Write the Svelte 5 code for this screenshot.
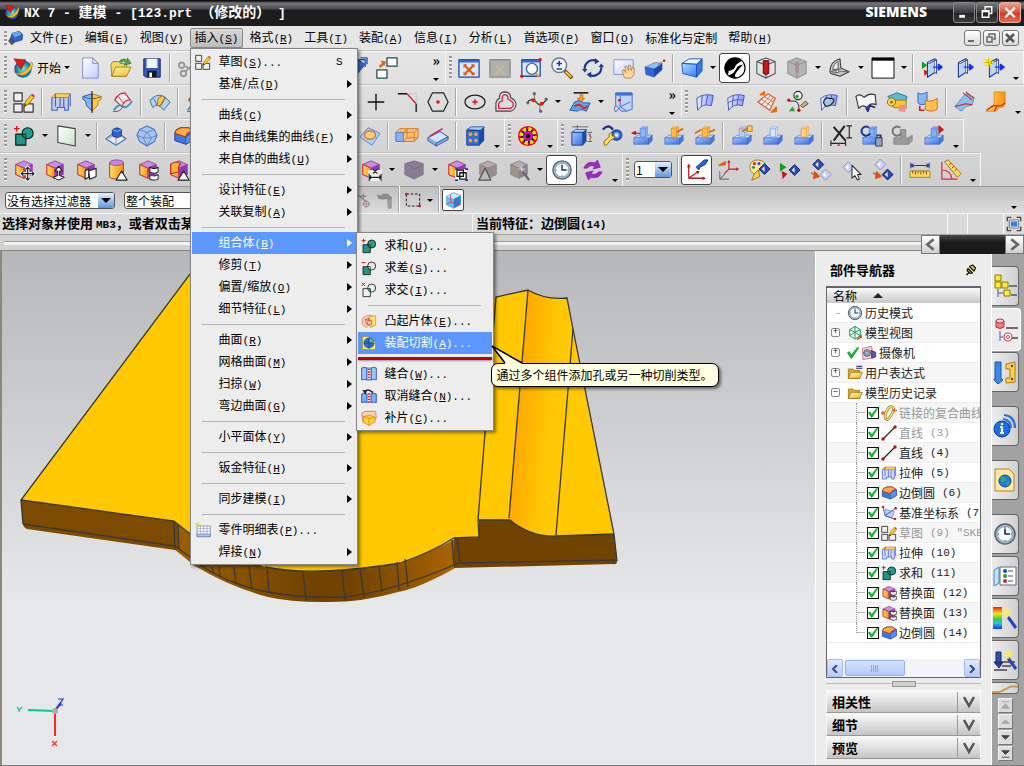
<script>
  const p = (d, fill = 'none', stroke = 'none', w = 1) =>
    `<path d="${d}" fill="${fill}" stroke="${stroke}" stroke-width="${w}" stroke-linejoin="round"/>`;
  const c = (x, y, r, fill = 'none', stroke = 'none', w = 1) =>
    `<circle cx="${x}" cy="${y}" r="${r}" fill="${fill}" stroke="${stroke}" stroke-width="${w}"/>`;
  const box = (t, l, r, s) =>
    p('M12 2 21 6 12 10 3 6Z', t, s) + p('M3 6 12 10V21L3 17Z', l, s) + p('M21 6 12 10V21L21 17Z', r, s);
  const magenta = box('#c490e6', 'url(#gOrange)', '#8a3db8', '#a0409a') + p('M3 6 12 10V21L3 17Z', 'none', '#e04020');
  const slab = p('M2 14 7 11H22L18 15Z', '#c0d8ff', '#4a78cc', .7) + p('M2 14H18V21H2Z', 'url(#gBlue)', '#3d68c0', .7) + p('M18 15 22 11V17L18 21Z', '#4a78d8', '#3d68c0', .7);
  const post = (a, s) => p('M9 4H15V13H9Z', a, s) + p('M9 4 11 2H17L15 4ZM15 4 17 2V11L15 13Z', a, s, .6);
  const sheet = p('M3 8Q11 2 21 5L19 16Q9 13 4 21Z', 'url(#gLav)', '#3f4fc8') + p('M9 5 8 16M15 4.5 13 15', 'none', '#3f4fc8');
  const diamond = (x, y, f) => p(`M${x - 6} ${y} ${x} ${y - 6} ${x + 6} ${y} ${x} ${y + 6}Z`, f, f === '#ccd2f0' ? '#8890b8' : '#101c60') + p(`M${x - 3} ${y} ${x} ${y - 3}V${y + 3}Z`, '#fff') ;
  const door = p('M7 6 15 2V17L7 22Z', '#b8d4f8', '#223a80', 1.2) + p('M15 2 17 3V18L15 17M7 6 9 7 17 3', '#eef', '#223a80') + p('M13 11H22M19 8 23 11 19 14Z', '#1030ff', '#1030ff', 1.5);
  const pencil = p('M12 17 14 11 20 4 23 7 17 14Z', '#ffc820', '#a06a00') + p('M20 4 21 3 23.500 5 23 7Z', '#e02020') + p('M12 17 13 14 15 16Z', '#503000');
  const star = p('M6 0V12M0 6H12M2 2 10 10M10 2 2 10', 'none', '#ffe020', 1.7) + p('M6 2V10M2 6H10', 'none', '#c8a800', 0.7);
  const ruler = p('M1 13H23V20H1Z', '#ffd860', '#b07a10') + p('M4 13V16M7 13V17M10 13V16M13 13V17M16 13V16M19 13V17', 'none', '#7a5000');
  const clock = c(12, 12, 10, '#a8b8c4', '#566470', 1.5) + c(12, 12, 7.5, '#f6fbff', '#8fa8b8') + p('M12 6.500V12H17', 'none', '#203040', 1.6) + p('M12 5V6M12 18V19M5 12H6M18 12H19', 'none', '#4080a0', 1.4);
  const folder = p('M2 6H9L11 8H19V20H2Z', '#e8a820', '#8a6008') + p('M2 20 6 11H23L19 20Z', 'url(#gFolder)', '#8a6008');
  const nx = c(12, 13, 9.5, 'url(#gGlobe)') + p('M2 16Q12 25 21 13Q24 7 21 5Q20 13 11 17Q5 19 2 16Z', '#ffc020', '#c07800', 0.6) + p('M2 2 15 3 10 14Z', '#e01818', '#901010', 0.6);

  const icons = {
    nx,
    app: p('M6 5 17 2 22 7 21 15 10 18 4 12Z', '#2a68d0', '#103a80') + p('M6 5 17 2 20 7 10 11Z', '#6aa8f0') + p('M4 12 1 17 6 22 10 18Z', '#4a5a70', '#222'),
    file: p('M4 1H15L21 7V23H4Z', 'url(#gPage)', '#8088c8') + p('M15 1V7H21Z', '#dfe4ff', '#8088c8'),
    open: p('M1 8 3 5H9L11 7H18V21H2Z', '#f4d860', '#a08020') + p('M2 21 6 11H23L18 21Z', 'url(#gFolder)', '#a08020') + p('M10 5Q14 0 19 4V1L23 7 15 9 18 6Q14 3 12 6Z', '#50b040', '#206a18', 0.7),
    save: p('M3 2H21V22H5L3 20Z', '#3858b0', '#182a68') + p('M6 2H18V12H6Z', '#f0f4ff') + p('M7 15H17V22H7Z', '#101828') + p('M9 17H12V22H9Z', '#f0f0f0'),
    cut: c(4, 9, 3, 'none', '#999', 2) + c(6, 18, 3, 'none', '#999', 2) + p('M7 10 21 16M8 16 20 5', 'none', '#999', 2),
    copy: p('M4 3H14V17H4Z', '#eee', '#999') + p('M9 7H19V21H9Z', '#f6f6f6', '#999'),
    part: p('M2 8 12 2 22 8 12 20Z', '#3a68c8', '#1a3888') + p('M14 3H22V11M17 1H24V8', 'none', '#2050d0', 1.5),
    links: p('M12 1H23V10H12ZM1 14H12V23H1Z', '#fff', '#284848', 1.4) + p('M4 11 8 7', 'none', '#e06010', 2.5) + p('M5 4 11 5 9 10Z', '#e06010'),
    fit: p('M1 3H23V22H1Z', '#dce8ff', '#2048b0', 1.4) + p('M1 3H23V6H1Z', '#3068d8') + p('M7 9 17 19M17 9 7 19', 'none', '#e05a10', 2.4) + p('M6 8H10L6 12ZM18 8H14L18 12ZM6 20H10L6 16ZM18 20H14L18 16Z', '#e05a10'),
    fitgray: p('M1 3H23V22H1Z', '#b0b0b0', '#8a8a8a', 1.4) + p('M7 9 17 19M17 9 7 19', 'none', '#c4bc9c', 2),
    zoombox: p('M2 3H22V21H2Z', '#dce8ff', '#2048b0', 1.4) + p('M2 3H22V6H2Z', '#3068d8') + c(13, 13, 6, '#f8fcff', '#506880', 1.5) + p('M17 18 21 22', 'none', '#e0a020', 2.6) + c(22, 3, 1.8, '#e01010') + c(2, 21, 1.8, '#e01010'),
    zoomin: c(9, 9, 8, '#eef4ff', '#707888', 1.6) + p('M6 7H12M9 4V10M6 13H12', 'none', '#2040a0', 1.7) + p('M15 15 23 23', 'none', '#705010', 4) + p('M16 16 22 22', 'none', '#ffc830', 2),
    rotate: p('M3 13A9 9 0 0 1 15 4', 'none', '#183a90', 2.4) + p('M21 11A9 9 0 0 1 9 20', 'none', '#183a90', 2.4) + p('M14 1 19 5 14 8ZM10 23 5 19 10 16Z', '#183a90') + p('M0 13H6L3 17ZM24 11H18L21 7Z', '#183a90'),
    pan: p('M1 3H22V19H1Z', 'url(#gPage)', '#7890c8') + p('M12 22 10 15 12 14 14 17 13 10 15 10 17 15 17 9 19 9 20 15 21 11 23 12V19L20 23H14Z', '#ffd898', '#a07040', 0.8),
    persp: p('M1 11 12 6 20 7 11 13Z', '#8cc0ff', '#2050a8', .5) + p('M1 11 11 13V22L2 19Z', '#2a68d8', '#2050a8', .5) + p('M11 13 20 7V14L11 22Z', '#1a48a8') + p('M15 9 20 5', 'none', '#777') + c(22, 4, 1.4, '#e01010'),
    cube: p('M1 7 9 2H23L17 8Z', '#e8f8ff', '#2050b0') + p('M1 7 17 8V22L2 18Z', 'url(#gCube)', '#2050b0') + p('M17 8 23 2V15L17 22Z', '#3078e8', '#2050b0'),
    yin: c(12, 12, 11, '#fff', '#000', 1.3) + p('M20 4A11 11 0 1 0 4 20C6 14 9 15 12 12C15 9 15 6 20 4Z', '#000') + p('M21 8Q15 8 13 13T5 20Q9 24 14 23Q10 21 14 16T21 8Z', '#000') + p('M5 15Q11 15 12 11T20 5L21 8Q15 9 13 13T5 19Z', '#fff'),
    redcyl: p('M12 1 22 5 12 9 2 5ZM2 5V18L12 23 22 18V5M12 9V23', 'none', '#555', 1.2) + p('M9 4H15V18Q12 20 9 18Z', '#c01818', '#600'),
    graycyl: p('M12 1 22 5V18L12 23 2 18V5Z', '#b4b4b4', '#999', 1.2) + p('M2 5 12 9 22 5M12 9V23', 'none', '#8a8a8a') + p('M10 5H14V17H10Z', '#a89090'),
    clip: p('M1 16Q1 5 12 2L13 12 22 16 12 21 2 18Z', '#c8c8c8', '#444', 1.2) + p('M4 14Q5 7 10 5V13ZM2 16 13 13M2 18 13 16 22 16', '#e8e8e8', '#555') + c(9, 15.500, 1.5, '#fff', '#555'),
    window: p('M0 1H24V23H0Z', '#fff', '#000', 1) + p('M0 1H24V4H0Z', '#000'),
    doorgo: door + p('M1 5 7 9 1 13Z', '#10a020') + p('M3 14 8 16 4 21Z', '#e01010'),
    door,
    doornew: door + star,
    sketch: p('M1 2H10V11H1ZM1 14H10V23H1ZM12 14H22V23H12Z', '#eee', '#333', 1.3) + pencil,
    extrude: p('M2 7 6 3H22L20 7Z', '#ffd060', '#c08000') + p('M2 7V21H8V18H16V21H20V7M6 3V17M11 7V18M15 7V18M22 3V17', 'rgba(150,170,255,.35)', '#4060d0', 1.2),
    revolve: p('M2 6 12 3V22L6 16 5 11 2 9Z', '#80b8ff', '#2050b0') + p('M12 3 22 6V9L19 11 18 16 12 22Z', '#ffc840', '#b87800') + p('M12 0V24', 'none', '#222', 1.2) + p('M2 6Q12 11 22 6', 'none', '#557'),
    sweep: p('M3 10Q7 2 14 2L20 10Q13 9 11 17Z', '#f6e8f0', '#d02030', 1.2) + p('M2 21Q7 13 12 17Q16 20 22 11', 'none', '#4090c0', 2) + p('M7 6 13 14M1 22Q8 24 12 17', 'none', '#d02030'),
    law: p('M1 10Q12-2 23 12L16 21Q10 12 4 18Z', '#b4d4ee', '#3c6c98') + p('M5 8 9 16M18 7 13 16', 'none', '#3c6c98') + p('M10 8 15 5 17 8 12 16 9 16Z', '#ffc840', '#a06808') ,
    plus: p('M12 3V21M3 12H21', 'none', '#111', 1.5),
    chamfer: p('M2 3H12M22 14V23', 'none', '#111', 1.4) + p('M12 3 22 14', 'none', '#e02020', 1.5) + '<path d="M12 3H22V14" fill="none" stroke="#999" stroke-dasharray="1 1.500"/>',
    hexagon: p('M6 2H18L23 12 18 22H6L1 12Z', 'none', '#222', 1.3) + c(12, 12, 2, '#e02010'),
    ellipse: '<ellipse cx="12" cy="12" rx="11" ry="7.500" fill="none" stroke="#222" stroke-width="1.400"/>' + p('M12 9V15M9 12H15', 'none', '#e02020', 1.4) + c(12, 12, 1.6, '#e02020'),
    offset: p('M1 22V13Q2 9 5 8Q4 2 10 1Q17 1 17 7Q23 10 23 15Q22 21 17 22Z', 'none', '#444', 1.2) + p('M4 19V14Q5 11 8 11Q7 4 11 4Q15 5 14 9Q20 11 20 15Q19 19 15 19Z', 'none', '#d82050', 1.4),
    spline: p('M1 13Q6 6 11 12T19 13L23 9', 'none', '#222', 1.3) + p('M9 4 10 12 15 15 15 22', 'none', '#777') + c(9, 3, 1.8, '#666') + c(16, 22, 1.8, '#666') + c(8, 10, 2.2, '#e02010') + c(17, 14, 2.2, '#e02010') + c(22, 9, 1.8, '#666') + c(2, 13, 1.6, '#666'),
    project: p('M5 2H21', 'none', '#222', 1.8) + p('M12 4V8H9L13 13 17 8H15V4Z', '#ffa020', '#b06000', .7) + p('M1 21 6 12Q12 9 16 13H23L19 22Q12 19 9 22Z', '#58a4f0', '#1a5cb0') + p('M6 17Q11 13 14 17T20 16', 'none', '#e02020', 2),
    wrap: p('M4 2H22V20L16 22H10L4 15Z', '#bcd4f8', '#4868c0') + p('M4 2H22V5H4Z', '#3a70e0') + p('M4 15Q1 20 4 23L9 17 20 12M9 5V17L16 22', 'none', '#4868c0') + c(8, 10, 1.4, '#e01010'),
    surfA: sheet,
    surfB: sheet + p('M3 13Q11 8 20 10', 'none', '#3f4fc8'),
    surfC: p('M2 12 13 3 21 8 15 21Z', '#fbeee4', '#e05028', 1.2) + p('M6 9 17 17M9 6 19 12M6 15 16 5M10 18 19 7', 'none', '#bb7050') + p('M5 4 9 1 9 4ZM17 23 22 18V22Z', '#e07010', '#e07010', 2),
    nodes: c(12, 5, 4.5, '#eee', '#333', 1.3) + c(11, 6, 1.8, '#20a020') + p('M3 11Q14 9 13 20', 'none', '#222') + c(2, 10, 1.8, '#d01010') + c(13, 21, 1.8, '#d01010') + p('M6 17 2 22 9 22Z', '#30a030') + p('M15 16 20 11 23 14 17 18Z', '#ffb020', '#1838b0'),
    surfE: sheet + p('M6 13Q7 6 13 8Q20 8 16 13Q12 18 8 16Z', '#9ac8ec', '#222', 1.3),
    bookgray: p('M1 6Q5 2 10 7Q15 2 22 4L23 15Q17 12 13 18Q8 14 4 19Z', '#f2f4f6', '#333', 1.2) + p('M12 18 14 22 16 16 22 18', 'none', '#1a2a90', 2),
    roll: p('M2 6 12 2 23 6 21 12H8Z', '#60b8d8', '#2078a0') + p('M6 10H22V19L8 18Z', '#ffc430', '#a87808') + c(6, 12, 4.5, '#ffd850', '#8a6410') + c(6, 12, 1.7, '#a07010') + p('M14 16 22 14 21 23 14 22Z', '#f09090'),
    stretch: p('M1 2Q5 5 11 1V13Q5 17 1 13Z', '#88b8f4', '#3868c0') + p('M9 10Q15 13 22 8V20Q15 24 9 20Z', '#ffc050', '#d07010') + p('M3 16V21L8 21', 'none', '#d02010', 1.8),
    sewA: p('M1 17 10 6 13 3 22 7 20 15 13 17 8 22Z', '#88c0f0', '#5a90d0') + p('M1 17 13 14 20 15M10 2 20 10M13 1 22 8', 'none', '#d02020', 1.1),
    sewB: p('M10 1H22V14Q22 18 16 18L12 22H1L10 14Z', 'url(#gOrange)', '#e08820') + p('M2 21Q8 15 13 16T22 13M13 16 10 22', 'none', '#e02010', 1.3),
    unite: p('M3 10H14V22H3Z', '#209888', '#111', 1.2) + c(16, 9, 6, '#20a090', '#111', 1.2) + p('M10 10H14V14', 'none', '#111') + p('M4 1V7M1 4H7', 'none', '#e01010', 1.5),
    subtract: p('M3 10H14V22H3Z', '#209888', '#111', 1.2) + c(16, 9, 6, '#e8e8e8', '#111', 1.2) + p('M14 14V10H10', 'none', '#111') + p('M1 4H7', 'none', '#e01010', 1.5),
    intersect: p('M3 10H14V22H3Z', '#eee', '#111', 1.2) + c(16, 9, 6, 'none', '#111', 1.2) + p('M10 10H14V14Q10 13 10 10Z', '#209888') + p('M1 1 6 6M6 1 1 6', 'none', '#e01010', 1.5),
    plane: p('M2 1 21 4V23L2 19Z', 'url(#gMint)', '#444', 1.2),
    datum: p('M1 15 12 7 23 15 12 22Z', '#dfeefe', '#3878c0', 1.2) + p('M8 5 13 3 18 5V12L13 14 8 12Z', '#2a64d0', '#1a3a90') + p('M8 5 13 7 18 5', 'none', '#8cc0ff') + p('M8 12 4 15M18 12 21 15M12 14V21', 'none', '#e06030'),
    poly: p('M12 1 20 5 23 11 20 18 12 23 4 18 1 11 4 5Z', '#a8c4f0', '#4c72c0', 1.2) + p('M4 5 12 8 20 5M12 8 8 14 1 11M12 8 17 14 23 11M8 14 12 23 17 14M8 14H17', 'none', '#5a80d0'),
    blend: p('M2 9Q3 4 9 3H17L23 7V16L14 21 2 17Z', '#3a78e8', '#1a3a90') + p('M2 9Q3 4 9 3H17L23 7Q15 7 14 13Z', '#ffb040', '#c03010', 1.2) + p('M14 13 23 7V16L14 21Z', '#5a90f0', '#1a3a90', .6),
    emboss: p('M1 13 10 3 23 9 14 22Z', '#a8d0ff', '#4a88d0') + '<ellipse cx="12" cy="11" rx="6" ry="4.500" fill="#ffd080" stroke="#e07020" stroke-width="1.500"/>',
    shell: p('M0 8 4 4H24V14L20 18H0Z', '#ffc080', '#d07818') + p('M0 8H8V18H0Z', '#88b0f8', '#5078c8') + p('M8 8H20V18M20 8 24 4M8 8 12 4V14L8 18M12 14H24', 'none', '#d07818'),
    trim: p('M1 14 14 7 23 13 10 20Z', '#d4e6ff', '#3a60b0', 1.2) + p('M3 12 17 4', 'none', '#e02040', 1.5) + p('M1 14V17L10 23V20M10 23 23 16V13L10 20Z', '#86aef0', '#3a60b0'),
    pattern: p('M3 5 8 2H22L20 6Z', '#a8ccff', '#2a58b8') + p('M3 6H17V22H3Z', '#2a70e0', '#1a3a90') + p('M17 6 22 2V17L17 22Z', '#184aa8') + c(7, 10, 2, '#ffa020') + c(13, 10, 2, '#ffa020') + c(7, 17, 2, '#ffa020') + c(13, 17, 2, '#ffa020'),
    target: c(12, 12, 11, '#d81010') + '<circle cx="12" cy="12" r="7.500" fill="#111" stroke="#ffe000" stroke-width="4" stroke-dasharray="3.500 2.400"/>' + c(12, 12, 5.5, '#c010c0') + c(12, 12, 2.4, '#111'),
    cubedim: p('M2 8 6 5H18L14 8Z', '#c4dcff', '#2a58b8') + p('M2 8H14V22H2Z', 'url(#gBlue)', '#1a3a90') + p('M14 8 18 5V18L14 22Z', '#184aa8') + p('M2 2H20M8 0V4M19 8H24M19 18H24M22 8V18', 'none', '#666') + p('M20 10 24 14', 'none', '#d02020'),
    wrench: c(17, 11, 5, '#6a9cf0', '#2a58b8', 3) + c(17, 11, 2, '#dde8ff') + p('M2 5Q8-2 13 5', 'none', '#1a3080', 2.4) + p('M4 22 3 18 9 13Q8 9 12 8L12 12 15 12Q15 16 11 16L6 22Z', '#ffe060', '#806000') ,
    featA: slab + post('#90b8f8', '#5d88d8') + p('M0 9 4 7V10ZM4 9H9', '#d01010', '#d01010', 1.2),
    featB: slab + post('#ffc040', '#e09030') + p('M15 8 22 4', 'none', '#e07010', 2.2),
    featC: slab + post('#ffc040', '#e09030') + p('M1 9 8 5M16 8 23 5', 'none', '#e07010', 2),
    featD: slab + post('#b8d0f0', '#88a0d0') + p('M12 7 18 4', 'none', '#e07010', 2) + p('M18 1H23V7H18Z', '#ffd060', '#c07010'),
    featE: slab + post('#dce8f8', '#88a8e0'),
    featF: slab + post('#ffd880', '#e8a040'),
    xdim: p('M4 2 17 17M16 1 4 17', 'none', '#222', 2.2) + p('M1 20H17M1 17V23M17 17V23M21 1V14M18 1H24M18 14H24', 'none', '#222', 1.2) + p('M8 20 11 23M11 20 8 23', 'none', '#d02020'),
    lock: slab + post('#80acf4', '#5d88d8') + p('M9 3A5 5 0 1 0 10 9', 'none', '#1a3898', 2.2) + p('M16 14H23V23H16Z', '#98a4c0', '#334') + p('M17.500 14V11H21.500V14', 'none', '#334', 1.4),
    graylock: p('M2 14H18V21H2ZM9 5H15V13H9ZM18 14 22 11V17L18 21Z', '#9a9a9a', '#888') + p('M9 3A5 5 0 1 0 10 9', 'none', '#777', 2.2),
    featPlay: slab + post('#80acf4', '#5d88d8') + p('M17 0 23 5 17 10Z', '#e01010'),
    mMove: magenta + p('M16 9V23M9 16H23M14 11 16 9 18 11M14 21 16 23 18 21M11 14 9 16 11 18M21 14 23 16 21 18', 'none', '#fff', 3.6) + p('M16 9V23M9 16H23M14 11 16 9 18 11M14 21 16 23 18 21M11 14 9 16 11 18M21 14 23 16 21 18', 'none', '#222', 1.3),
    mPull: magenta + p('M16 8 20 13H17V18L22 20 16 23 10 20 15 18V13H12Z', '#fff', '#222', 1.1),
    mOff: magenta + p('M11 13 15 11V20L11 22ZM15 13 18 12 23 10V19L16 22Z', '#fff', '#222', 1.2),
    mCyl: p('M4 4V20Q11 24 19 20V4Z', 'url(#gOrange)', '#b03020') + '<ellipse cx="11.500" cy="4" rx="7.500" ry="3" fill="#c088e0" stroke="#a040a0"/>' + p('M17 13 23 23H11Z', '#fff', '#222', 1.2),
    mRep: magenta + p('M14 9Q19 12 23 9V14Q19 17 14 14ZM14 17Q19 20 23 17V22Q19 24 14 22Z', '#fff', '#222', 1.1),
    mBlend: magenta + p('M3 6Q8 1 14 5Q10 8 12 14L3 16Z', '#ffb830', '#c02020', 1.2) + p('M17 13 23 23H11Z', '#fff', '#222', 1.2),
    mDim: magenta + p('M9 12H24V24H9Z', '#eee') + p('M10 16V24M23 16V24M10 20H23M12 18 10 20 12 22M21 18 23 20 21 22M14 11 19 16M19 11 14 16', 'none', '#222', 1.2),
    mGray: p('M2 5 12 2 22 5V17L12 22 2 17Z', '#8a7c94', '#85788c') + p('M6 6 12 11 22 6', 'none', '#746a80'),
    mGroup: magenta + p('M10 11H23V23H10Z', '#fff') + p('M12 12H19V19H12ZM15 15H22V22H15Z', 'none', '#111', 1.4) + p('M10 10H13V12H10ZM21 10H24V12H21ZM10 22H13V24H10ZM21 22H24V24H21Z', '#1030c0'),
    mGrayTri: box('#b8a8a8', '#a09488', '#988c90', '#888') + p('M9 10 15 23H2Z', '#bbb', '#555', 1.4),
    mGrayWand: box('#b8a8b0', '#a09488', '#8c8090', '#888') + p('M15 12 23 23', 'none', '#666', 2.5) + p('M15 7V14M11 11H19M12 8 18 14', 'none', '#ddd'),
    clock,
    update: p('M2 10Q5 2 14 4L17 1 20 9 12 11 14 8Q8 6 6 10Z', '#a028c8', '#70108c', .6) + p('M22 14Q19 22 10 20L7 23 4 15 12 13 10 16Q16 18 18 14Z', '#a028c8', '#70108c', .6),
    axes: p('M3 21V7M3 21H20M3 21 13 14', 'none', '#c01818', 1.4) + p('M1 9 3 5 5 9ZM18 19 22 21 18 23ZM11 13 15 13 13 17Z', '#c01818') + p('M11 9 20 1 24 1 21 6 15 9 14 12Z', '#2a62d8', '#102c80'),
    axes2: p('M13 11V2M13 11H23M13 11 8 16', 'none', '#c02020', 1.2) + p('M11 4 13 1 15 4ZM21 9 24 11 21 13Z', '#c02020') + p('M3 22V13M3 22H13M3 22 9 16', 'none', '#777', 1.2) + p('M2 7 9 3 9 6Z', '#e06010', '#e06010', 1.5),
    palette: p('M2 9Q2 1 11 1Q20 2 19 9Q18 13 13 12L10 16H6Q2 14 2 9Z', '#ffe8a0', '#a07820') + c(7, 5, 1.7, '#e02020') + c(12, 5, 1.7, '#2050e0') + c(6, 9, 1.7, '#20a040') + p('M4 23 7 16 11 12 13 19 9 21Z', '#ffd040', '#a07010') + diamond(18, 11, '#2a48b8'),
    playD: p('M1 4 8 9 1 14Z', '#10a020') + p('M3 13 9 16 4 22Z', '#d01010') + diamond(17, 12, '#2a48b8'),
    dia1: diamond(9, 6, '#2a48b8') + diamond(17, 17, '#ccd2f0') + p('M1 15 6 18M5 14 10 19 4 21Z', '#e05010', '#e05010', 1.5),
    diaCur: diamond(8, 9, '#ccd2f0') + p('M12 7V21L15 18 18 23 20 22 18 17H22Z', '#fff', '#222', 1.1),
    dia2: diamond(9, 6, '#ccd2f0') + diamond(17, 17, '#2a48b8') + p('M1 15 6 18M5 14 10 19 4 21Z', '#e05010', '#e05010', 1.5),
    measure: ruler + p('M2 7H22M2 4V10M22 4V10M5 5 2 7 5 9M19 5 22 7 19 9', 'none', '#2038a0', 1.1),
    angle: p('M2 3V22H19M2 12Q12 12 13 22', 'none', '#d03040', 1.3) + p('M5 3 9 1 23 16 19 20Z', '#ffd860', '#a07010') + p('M10 6 12 5M13 10 15 8M16 13 18 11', 'none', '#604000'),
    pick: p('M4 4 16 14M12 2V10M8 6H16', 'none', '#888', 1.8) + c(16, 17, 4, 'none', '#a08080', 1.3) + p('M16 11V23M10 17H22', 'none', '#a08080'),
    hammer: p('M1 4 5 6 8 3H15L20 7V11L15 9 9 10 2 9Z', '#8c8c8c', '#777') + p('M15 9 20 11V23H16Z', '#a0a098', '#888'),
    marquee: '<path d="M2 3H22V21H2Z" fill="none" stroke="#222" stroke-width="1.500" stroke-dasharray="4 2.500"/>' + c(2, 3, 2, '#d01010') + c(22, 21, 2, '#d01010'),
    cubeSel: p('M2 6 12 1 22 5V18L12 23 2 18Z', '#c8ecff', '#4888d0') + p('M2 6 12 10V23L2 18Z', '#6abcf4') + p('M12 10 22 5V18L12 23Z', '#2a80e0') + p('M8 4V14L20 18M8 14 3 17', 'none', '#e03040', 1.2),
    screen: p('M2 8V2H8M16 2H22V8M22 16V22H16M8 22H2V16', 'none', '#444', 2) + p('M5 6H19V18H5Z', '#fff', '#334') + p('M7 8H17V16H7Z', '#3a80e0'),
    table: p('M3 6H23V22H3Z', '#fff', '#6078a8') + p('M3 10H23M3 14H23M8 6V18M13 6V18M18 6V18', 'none', '#8898b8') + p('M3 18H23V22H3Z', '#a8c4f0', '#6078a8') + p('M4 0V9M0 4H9M1 1 7 7M7 1 1 7', 'none', '#f0d820', 1.2),
    bump: p('M2 8Q10 1 20 5L22 18Q14 14 8 22L2 17Z', '#f8d0a8', '#e07050') + p('M12 6 22 4V18L14 22Z', '#ffe070', '#c89820') + p('M6 10 12 8 16 12V18L9 17ZM6 10 16 12M12 8 9 17', 'none', '#c04060'),
    cutasm: p('M2 2H11L14 5V9H22V22H2Z', '#ffe860', '#907810') + c(12, 12, 7.5, '#2a70d0', '#103880') + p('M12 4.500Q19 6 19.500 12H12Z', '#50b8a0') + p('M12 4V20M4 12H20', 'none', '#103880'),
    sew: p('M1 3Q5 1 9 3V21Q5 19 1 21ZM23 3Q19 1 15 3V21Q19 19 23 21Z', '#9cc4f8', '#2050b0', 1.3) + p('M9 3H15V21H9Z', '#f6f6ff', '#2050b0') + '<path d="M12 4V21" stroke="#e02020" stroke-width="4" stroke-dasharray="2 2"/>',
    unsew: p('M1 9Q5 7 9 9V22Q5 20 1 22ZM23 9Q19 7 15 9V22Q19 20 23 22Z', '#7cb0f4', '#2050b0', 1.3) + '<path d="M12 8V22" stroke="#e02020" stroke-width="4" stroke-dasharray="2 2"/>' + p('M5 7Q9-1 18 7', 'none', '#223', 2.6) + p('M2 3 9 3 7 10Z', '#223'),
    patch: p('M1 5 6 2H22L23 12 12 20 3 18Z', '#ffd0b0', '#d85030') + p('M3 10 13 8 21 11V18L12 23 4 19Z', '#ffd040', '#c08010') + p('M4 10 12 13 21 11M12 13V23', 'none', '#c08010'),
    views: p('M12 2 20 7V16L12 21 4 16V7ZM4 7 12 11 20 7M12 11V21M12 2V11L4 16M12 11 20 16', 'none', '#18a058', 1.5) + p('M15 22 22 17', 'none', '#e04010', 2) + p('M22 14V20L18 16Z', '#e04010'),
    camera: p('M2 5 16 2 18 19 3 22Z', '#f8d0d8', '#d84060') + p('M15 8 22 11V18L16 20Z', '#6050a0', '#402070') + c(9, 12, 5, '#90b0c8', '#405870', 1.4) + c(9, 12, 2, '#fff', '#405870'),
    folder,
    folderEq: folder + p('M14 2H23M14 5H23', 'none', '#102070', 1.6),
    chain: p('M10 22Q3 20 8 10T17 3Q21 6 16 14T10 22Z', 'none', '#8a7020', 4) + p('M10 22Q3 20 8 10T17 3Q21 6 16 14T10 22Z', 'none', '#ffe070', 2.2) + p('M0 12H6M3 9V15M17 8H24M20 5V11', 'none', '#e06030', 2),
    line: p('M3 21 21 3', 'none', '#222', 1.6) + c(3, 21, 2.6, '#c01010') + c(21, 3, 2.6, '#c01010'),
    csys: p('M6 6 20 10 17 19 8 17Z', '#c0d0f4', '#7888c8') + p('M3 3 6 16 20 21M6 16 22 5', 'none', '#3858c0', 1.4) + c(3, 3, 2, '#d02020') + c(21, 21, 2, '#d02020') + c(22, 5, 2, '#d02020'),
    asmTab: p('M2 1H8V7H2ZM2 8H8V14H2ZM9 8H15V14H9Z', '#ffe840', '#907800') + p('M11 16H17V22H11Z', '#ffe840', '#907800') + p('M16 12H24M18 21H24', 'none', '#555', 1.4) + p('M5 15V23M5 19H10', 'none', '#7080c0', 1.4),
    partTab: p('M2 3V9Q6 12 10 9V3Z', '#f08080', '#b03040') + '<ellipse cx="6" cy="3" rx="4" ry="2" fill="#fcc" stroke="#b03040"/>' + p('M12 10H24M18 20H24', 'none', '#444', 1.5) + p('M6 13V23M6 19H9', 'none', '#8080c8', 1.4) + c(14, 19, 4, '#fff', '#d04050', 1.2) + c(14, 19, 1.5, '#fff', '#d04050'),
    reuse: p('M2 2H8V18L10 20 5 24 1 20 2 18Z', '#3a8ae8', '#1a50b0') + p('M13 4 22 2V22L13 23V18H17V9H13Z', '#ffd050', '#b07a10') + c(19, 6, 1.2, '#554010') + c(19, 19, 1.2, '#554010'),
    info: c(9, 15, 8, '#1a70e0', '#0a3c90') + p('M9 9V11M7 13H9V19M7 19H11', 'none', '#fff', 2.2) + p('M10 5Q18 6 18 14M11 1Q22 2 22 14', 'none', '#2870d8', 2.2),
    web: p('M2 1H16L21 6V23H2Z', '#ffe8a0', '#b08820') + c(12, 13, 6, '#2878e0', '#1048a0') + p('M8 9Q12 8 13 12Q10 16 8 13ZM13 15 17 13 15 18Z', '#30b060'),
    roles: p('M1 6 6 3V19L1 22Z', '#c0e0f4', '#5088b0') + p('M7 3H23V21H7Z', '#fff', '#5c6c7c') + c(12, 7, 2, '#2040d0') + c(12, 12, 2, '#20a030') + c(12, 17, 2, '#d02050') + p('M15 7H20M15 12H20M15 17H20', 'none', '#556', 1.2),
    rainbow: '<rect x="0" y="1" width="9" height="22" fill="url(#gRain)"/>' + p('M15 11 23 22', 'none', '#2840c0', 3) + p('M14 2V12M9 7H19M11 4 17 10M17 4 11 10', 'none', '#ffe860', 1.4),
    wandTab: p('M3 4V16H8V4ZM1 14 6 20 10 14Z', '#3050b0', '#182860') + p('M9 14H22M9 18H18M1 22H14', 'none', '#444', 1.3) + p('M15 10 23 21', 'none', '#2840c0', 3) + p('M15 1V11M10 6H20M12 3 18 9M18 3 12 9', 'none', '#ffe860', 1.4),
    pin: p('M9 5 15 2 21 8 18 14Z', '#e8e040', '#111', 2.4) + p('M6 9 15 18 11 19 4 13Z', '#e8e040', '#111', 2.4) + p('M8 17 3 22', 'none', '#111', 3),
  };

  const rows = [
    [
      '# start file open save | cut copy | copy copy | copy part links »',
      '# fit fitgray zoombox zoomin rotate pan persp | cube v *yin redcyl graycyl v clip v window v | doorgo door doornew _',
    ],
    [
      '# sketch | extrude revolve sweep | law | sweep law | law | sweep | law | plus chamfer hexagon | ellipse offset spline v project v wrap »',
      '# surfA surfB surfC nodes surfE | bookgray roll stretch | sewA sewB _',
    ],
    [
      '# unite v plane v | datum poly | blend blend blend blend blend blend emboss | shell trim | pattern _',
      '# target _',
      '# cubedim wrench featA featB featC | featD featE featF | xdim lock graylock featPlay _',
    ],
    [
      '# mMove mPull mOff mCyl mRep mBlend mOff mOff mOff mOff mOff | mDim v mGray v mGroup mGrayTri mGrayWand v *clock update _',
      '# count | *axes axes2 palette playD dia1 diaCur dia2 | measure angle _',
    ],
  ].map((r) => r.map((t) => t.split(' ')));

  const menus = [
    ['文件', 'F'], ['编辑', 'E'], ['视图', 'V'], ['插入', 'S'], ['格式', 'R'], ['工具', 'T'], ['装配', 'A'],
    ['信息', 'I'], ['分析', 'L'], ['首选项', 'P'], ['窗口', 'O'], ['标准化与定制', ''], ['帮助', 'H'],
  ];

  const insertMenu = [
    { t: '草图', k: 'S', dots: true, icon: 'sketch', short: 'S' },
    { t: '基准/点', k: 'D', sub: true },
    null,
    { t: '曲线', k: 'C', sub: true },
    { t: '来自曲线集的曲线', k: 'F', sub: true },
    { t: '来自体的曲线', k: 'U', sub: true },
    null,
    { t: '设计特征', k: 'E', sub: true },
    { t: '关联复制', k: 'A', sub: true },
    null,
    { t: '组合体', k: 'B', sub: true, open: true },
    { t: '修剪', k: 'T', sub: true },
    { t: '偏置/缩放', k: 'O', sub: true },
    { t: '细节特征', k: 'L', sub: true },
    null,
    { t: '曲面', k: 'R', sub: true },
    { t: '网格曲面', k: 'M', sub: true },
    { t: '扫掠', k: 'W', sub: true },
    { t: '弯边曲面', k: 'G', sub: true },
    null,
    { t: '小平面体', k: 'Y', sub: true },
    null,
    { t: '钣金特征', k: 'H', sub: true },
    null,
    { t: '同步建模', k: 'I', sub: true },
    null,
    { t: '零件明细表', k: 'P', dots: true, icon: 'table' },
    { t: '焊接', k: 'N', sub: true },
  ];

  const combineMenu = [
    { t: '求和', k: 'U', icon: 'unite' },
    { t: '求差', k: 'S', icon: 'subtract' },
    { t: '求交', k: 'I', icon: 'intersect' },
    null,
    { t: '凸起片体', k: 'E', icon: 'bump' },
    { t: '装配切割', k: 'A', icon: 'cutasm', active: true },
    null,
    { t: '缝合', k: 'W', icon: 'sew' },
    { t: '取消缝合', k: 'N', icon: 'unsew' },
    { t: '补片', k: 'C', icon: 'patch' },
  ];

  const tree = [
    { t: '历史模式', icon: 'clock', exp: '' },
    { t: '模型视图', icon: 'views', exp: '+' },
    { t: '摄像机', icon: 'camera', exp: '+', tick: true },
    { t: '用户表达式', icon: 'folderEq', exp: '+' },
    { t: '模型历史记录', icon: 'folder', exp: '-' },
    { t: '链接的复合曲线', n: '', icon: 'chain', leaf: true, dim: true },
    { t: '直线', n: '(3)', icon: 'line', leaf: true, dim: true },
    { t: '直线', n: '(4)', icon: 'line', leaf: true },
    { t: '拉伸', n: '(5)', icon: 'extrude', leaf: true },
    { t: '边倒圆', n: '(6)', icon: 'blend', leaf: true },
    { t: '基准坐标系', n: '(7', icon: 'csys', leaf: true },
    { t: '草图', n: '(9) "SKE', icon: 'sketch', leaf: true, dim: true },
    { t: '拉伸', n: '(10)', icon: 'extrude', leaf: true },
    { t: '求和', n: '(11)', icon: 'unite', leaf: true },
    { t: '替换面', n: '(12)', icon: 'mRep', leaf: true },
    { t: '替换面', n: '(13)', icon: 'mRep', leaf: true },
    { t: '边倒圆', n: '(14)', icon: 'blend', leaf: true, last: true },
  ];

  const tabs = [
    ['asmTab', ''], ['partTab', 'on'], ['reuse', ''], ['info', 'far'], ['web', 'far'],
    ['clock', 'far'], ['roles', ''], ['rainbow', ''], ['wandTab', ''],
  ];

  const seams = 'M212 567 214 574M219 567 220 577M234 567 236 584M249 567 252 589M267 569 269 593M303 572 306 600M342 571 345 600M360 569 364 597M379 566 382 592M397 562 399 590M405 559 408 587M452 540 454 566M457 538 460 563M174 521 175 549M178 524 179 549';
</script>

{#snippet icon(name, cls = '')}
  <svg class="icon {cls}" viewBox="0 0 24 24" aria-hidden="true">{@html icons[name]}</svg>
{/snippet}

{#snippet mnemonic(k, dots)}{#if k}<span class="mono">(<u>{k}</u>){dots ? '...' : ''}</span>{/if}{/snippet}

<svg class="defs" aria-hidden="true">
  <defs>
    <linearGradient id="gOrange"><stop offset="0" stop-color="#ffe060" /><stop offset="1" stop-color="#f89010" /></linearGradient>
    <linearGradient id="gBlue" y2="1"><stop offset="0" stop-color="#a0c4ff" /><stop offset="1" stop-color="#3a6ee0" /></linearGradient>
    <linearGradient id="gCube" y2="1"><stop offset="0" stop-color="#b0dcff" /><stop offset="1" stop-color="#2f80f0" /></linearGradient>
    <linearGradient id="gLav"><stop offset="0" stop-color="#eef0ff" /><stop offset="1" stop-color="#8c9cf4" /></linearGradient>
    <linearGradient id="gPage" y2="1"><stop offset="0" stop-color="#ffffff" /><stop offset="1" stop-color="#c4ccff" /></linearGradient>
    <linearGradient id="gFolder" y2="1"><stop offset="0" stop-color="#fff6a8" /><stop offset="1" stop-color="#f0b830" /></linearGradient>
    <linearGradient id="gMint" y2="1"><stop offset="0" stop-color="#ffffff" /><stop offset="1" stop-color="#c4e4cc" /></linearGradient>
    <linearGradient id="gRain" x2="0" y2="1">
      <stop offset="0" stop-color="#f02010" /><stop offset=".3" stop-color="#ffe010" /><stop offset=".55" stop-color="#30d040" /><stop offset=".75" stop-color="#20c0f0" /><stop offset="1" stop-color="#2030e0" />
    </linearGradient>
    <radialGradient id="gGlobe"><stop offset="0" stop-color="#90e8f0" /><stop offset=".6" stop-color="#20a0a8" /><stop offset="1" stop-color="#1850b0" /></radialGradient>
  </defs>
</svg>

<div class="app">
  <header class="title">
    {@render icon('nx', 'small')}
    <h1>NX 7 - <span>建模</span> - [123.prt <span>（修改的）</span> ]</h1>
    <strong>SIEMENS</strong>
    <div class="winbtns">
      <button aria-label="最小化"><svg viewBox="0 0 20 20"><path d="M5 14H11" stroke="#fff" stroke-width="3" /></svg></button>
      <button aria-label="还原"><svg viewBox="0 0 20 20"><path d="M8 7V4H15V11H12M5 8H12V15H5ZM5 9H12" fill="none" stroke="#fff" stroke-width="1.500" /></svg></button>
      <button class="close" aria-label="关闭"><svg viewBox="0 0 20 20"><path d="M5 5 15 15M15 5 5 15" stroke="#fff" stroke-width="2.500" /></svg></button>
    </div>
  </header>

  <nav class="menubar">
    <i class="grip"></i>
    {@render icon('app', 'small')}
    {#each menus as [t, k]}
      <div class="menuslot">
        <button class="menubtn" class:opened={t === '插入'}>{t}{@render mnemonic(k)}</button>
        {#if t === '插入'}
          <div class="menu">
            {#each insertMenu as m}
              {#if m}
                <div class="slot">
                  <button class="item" class:hot={m.open}>
                    <span class="pic">{#if m.icon}{@render icon(m.icon, 'small')}{/if}</span>
                    <span class="label">{m.t}{@render mnemonic(m.k, m.dots)}</span>
                    {#if m.short}<span class="mono short">{m.short}</span>{/if}
                    {#if m.sub}<i class="more"></i>{/if}
                  </button>
                  {#if m.open}
                    <div class="menu submenu">
                      {#each combineMenu as s, j}
                        {#if s}
                          <div class="slot">
                            <button class="item" class:hot={s.active}>
                              <span class="pic">{@render icon(s.icon, 'small')}</span>
                              <span class="label">{s.t}{@render mnemonic(s.k, true)}</span>
                            </button>
                            {#if s.active}
                              <div class="tip" role="tooltip">
                                <svg viewBox="0 0 34 20"><path d="M14 20V18L1 1 31 18V20Z" fill="#ffffe1" /><path d="M14 18 1 1 31 18" fill="none" stroke="#000" stroke-width="1.500" /></svg>
                                <p>通过多个组件添加孔或另一种切削类型。</p>
                              </div>
                            {/if}
                          </div>
                        {:else}
                          <hr class:red={j === 6} />
                        {/if}
                      {/each}
                    </div>
                  {/if}
                </div>
              {:else}
                <hr />
              {/if}
            {/each}
          </div>
        {/if}
      </div>
    {/each}
    <div class="docbtns">
      <button aria-label="最小化窗口"><svg viewBox="0 0 14 14"><path d="M3 10H9" stroke="#666" stroke-width="2" /></svg></button>
      <button aria-label="还原窗口"><svg viewBox="0 0 14 14"><path d="M5 5V3H11V8H9M3 6H8V11H3Z" fill="none" stroke="#666" stroke-width="1.500" /></svg></button>
      <button aria-label="关闭窗口"><svg viewBox="0 0 14 14"><path d="M3 3 11 11M11 3 3 11" stroke="#555" stroke-width="2.500" /></svg></button>
    </div>
  </nav>

  <div class="bars">
    {#each rows as row}
      <div class="barrow">
        {#each row as bar}
          <div class="toolbar">
            {#each bar as t}
              {#if t === '#'}<i class="grip"></i>
              {:else if t === '|'}<i class="sep"></i>
              {:else if t === 'v'}<button class="arrow" aria-label="更多"><i class="down"></i></button>
              {:else if t === '_'}<button class="arrow low" aria-label="选项"><i class="down"></i></button>
              {:else if t === '»'}<button class="chev" aria-label="展开"><b>»</b><i class="down"></i></button>
              {:else if t === 'start'}<button class="start">{@render icon('nx')}开始<i class="down"></i></button>
              {:else if t === 'count'}
                <span class="combo count"><select aria-label="数量"><option>1</option></select><i><b class="down"></b></i></span>
              {:else}
                <button class="tool" class:pressed={t[0] === '*'} aria-label={t.replace('*', '')}>{@render icon(t.replace('*', ''))}</button>
              {/if}
            {/each}
          </div>
        {/each}
      </div>
    {/each}
  </div>

  <div class="selbar">
    <span class="combo filter"><select aria-label="过滤器"><option>没有选择过滤器</option></select><i><b class="down"></b></i></span>
    <span class="combo scope"><select aria-label="范围"><option>整个装配</option></select><i><b class="down"></b></i></span>
    <button class="mini" aria-label="pick">{@render icon('pick', 'mid')}</button>
    <button class="mini" aria-label="hammer">{@render icon('hammer', 'mid')}</button>
    <i class="sep"></i>
    <button class="mini" aria-label="marquee">{@render icon('marquee', 'small')}</button>
    <button class="arrow" aria-label="更多"><i class="down"></i></button>
    <i class="sep"></i>
    <button class="mini on" aria-label="cube">{@render icon('cubeSel', 'mid')}</button>
    <button class="arrow end" aria-label="选项"><i class="down"></i></button>
  </div>

  <div class="status">
    <p class="cue">选择对象并使用 <span class="mono">MB3</span>，或者双击某</p>
    <p class="feat">当前特征：边倒圆<span class="mono">(14)</span></p>
    <i></i><i></i>
    <button aria-label="全屏">{@render icon('screen', 'small')}</button>
  </div>
  <div class="rail">
    <i></i>
    <div class="mover">
      <button aria-label="左"><svg viewBox="0 0 16 16"><path d="M11 3 5 8 11 13" /></svg></button><span></span><button aria-label="右"><svg viewBox="0 0 16 16"><path d="M5 3 11 8 5 13" /></svg></button>
    </div>
  </div>

  <main>
    <section class="view">
      <svg viewBox="2 251 813 513" preserveAspectRatio="xMinYMin meet">
        <defs>
          <linearGradient id="rib" gradientUnits="userSpaceOnUse" x1="518" y1="400" x2="552" y2="403">
            <stop offset="0" stop-color="#ffa800" /><stop offset="1" stop-color="#ffc803" />
          </linearGradient>
          <linearGradient id="rim" gradientUnits="userSpaceOnUse" x1="190" y1="0" x2="456" y2="0">
            <stop offset="0" stop-color="#9a5c00" /><stop offset=".45" stop-color="#704300" /><stop offset=".6" stop-color="#704300" /><stop offset="1" stop-color="#a86400" />
          </linearGradient>
        </defs>
        <path d="M174 521 190 534 265 567Q313 577 400 563 430 553 457 538V567Q420 588 398 592 360 603 322 602 290 602 268 597 230 587 195 566L174 549Z" fill="url(#rim)" />
        <path d="M21 500 23 524Q23 527 27 529L175 550 179 549 178 523 174 520Z" fill="#7c4a00" />
        <path d="M454 538 479 537V520H510Q530 537 556 536L614 534 617 561Q617 565 613 564L454 568Z" fill="#704300" />
        <path d="M21 500 208 250 492 300 496 297 528 290Q545 300 567 298L573 329 614 534 556 536Q530 537 510 520H478L479 537 454 538Q430 553 400 563 313 577 265 567L190 534 174 521Z" fill="#ffc800" />
        <path d="M528 290Q545 300 567 298L573 329 556 536Q530 537 509 519Z" fill="url(#rib)" />
        <g fill="none" stroke="#38383a" stroke-width="1.300">
          <path d="M208 250 21 500 174 521 194 537M21 500 23 524M265 567Q313 577 400 563 430 553 454 538L479 537 478 520 496 297 528 290Q545 300 567 298L573 329 614 534 617 561" />
          <path d="M478 520H510Q530 537 556 536L614 534M528 290 509 518M573 329 556 535M23 524 175 546 190 557M200 565Q230 585 268 592 305 599 345 597 390 592 454 565L460 563 616 560" />
          <path d={seams} />
        </g>
        <g fill="none" stroke-width="2">
          <path d="M28 710 54 711" stroke="#00c890" /><path d="M55 713V736" stroke="#ff2828" /><path d="M56 709 61 703" stroke="#2828ff" />
        </g>
        <circle cx="55" cy="711" r="3" fill="#aaa" />
        <g fill="none" stroke-width="1.200">
          <path d="M17 707 19 710 22 707M19 710V712" stroke="#00c890" /><path d="M58 699H63L59 705H63" stroke="#2828ff" /><path d="M52 741 57 746M57 741 52 746" stroke="#ff2828" />
        </g>
      </svg>
    </section>

    <aside class="panel">
      <h2>部件导航器{@render icon('pin', 'tiny')}</h2>
      <div class="treebox">
        <button class="colhead">名称<i></i></button>
        <ul>
          {#each tree as n, i}
            <li class:leaf={n.leaf} class:dim={n.dim} class:last={n.last} class:alt={i % 2}>
              {#if n.leaf}
                <label><input type="checkbox" checked />{@render icon(n.icon, 'small')}{n.t}{#if n.n}<span class="mono num">{n.n}</span>{/if}</label>
              {:else}
                <span class="exp" class:none={!n.exp}>{n.exp === '-' ? '−' : n.exp}</span>
                {#if n.tick}<i class="tick"></i>{/if}{@render icon(n.icon, 'small')}{n.t}
              {/if}
            </li>
          {/each}
        </ul>
        <div class="hscroll">
          <button aria-label="向左"><svg viewBox="0 0 8 8"><path d="M6 0 2 4 6 8" /></svg></button>
          <span class="thumb"><i></i></span>
          <button aria-label="向右"><svg viewBox="0 0 8 8"><path d="M2 0 6 4 2 8" /></svg></button>
        </div>
      </div>
      <div class="split"><i></i></div>
      {#each ['相关性', '细节', '预览'] as g}
        <button class="group"><span>{g}</span><svg viewBox="0 0 14 14"><path d="M2 2 7 11 12 2" fill="none" stroke="#555" stroke-width="2.500" /></svg></button>
      {/each}
    </aside>

    <aside class="rescol">
      {#each tabs as [name, cls]}
        <button class="tab {cls}" aria-label={name}>{@render icon(name, 'tabpic')}</button>
      {/each}
      <button class="tab stub" aria-label="更多选项卡"><svg viewBox="0 0 26 9"><path d="M0 8Q8 9 14 5T26 3" fill="none" stroke="#c89848" stroke-width="2" /></svg></button>
      <div class="steps">
        <button class="off" aria-label="首个"><svg viewBox="0 0 14 14"><path d="M3 3H11" /><path d="M3 10 7 5 11 10Z" /></svg></button>
        <button class="off" aria-label="上移"><svg viewBox="0 0 14 14"><path d="M3 9 7 5 11 9Z" /></svg></button>
        <button aria-label="下移"><svg viewBox="0 0 14 14"><path d="M3 5 7 9 11 5Z" /></svg></button>
        <button aria-label="末个"><svg viewBox="0 0 14 14"><path d="M3 4 7 8 11 4Z" /><path d="M3 11H11" /></svg></button>
      </div>
    </aside>
  </main>
</div>

<style>
  :global(body) { margin: 0; background: #000; overflow: hidden; }
  .app, button, select { font: 12px/16px "Noto Sans CJK SC", sans-serif; color: #000; }
  .app { display: flex; flex-direction: column; min-height: 100vh; box-sizing: border-box; background: #d4d4d4; border-bottom: 2px solid #777; }
  button { background: none; border: 0; padding: 0; white-space: nowrap; }
  p, h1, h2, ul, hr { margin: 0; padding: 0; }
  .defs { display: block; width: 0; height: 0; }
  .icon { width: 22px; height: 22px; flex: none; display: block; overflow: visible; }
  .icon.small { width: 16px; height: 16px; }
  .icon.mid { width: 17px; height: 17px; }
  .icon.tiny { width: 12px; height: 12px; }
  .icon.tabpic { width: 24px; height: 24px; }
  .mono { font-family: "Liberation Mono", monospace; font-size: 11px; white-space: pre; }
  .down { display: block; border: 3px solid transparent; border-top-color: #000; border-bottom: 0; }

  .title { display: flex; align-items: center; height: 26px; box-sizing: border-box; padding: 0 3px 2px 4px; background: linear-gradient(#111 0 1px, #77777c 3px, #4a4a4e 9px, #1d1d1d 10px); }
  .title h1 { margin-left: 4px; font: bold 13px/20px "Liberation Mono", "Noto Sans CJK SC", monospace; color: #fff; white-space: pre; }
  .title h1 span { font: bold 14px/20px "Noto Sans CJK SC", sans-serif; }
  .title strong { margin-left: auto; font: 800 14px/20px "Open Sans", sans-serif; color: #fff; }
  .winbtns { display: flex; gap: 1px; margin-left: 26px; }
  .winbtns button { width: 22px; height: 21px; border: 1px solid #888; border-radius: 3px; background: linear-gradient(#77777c, #3a3a3c 50%, #242424 52%, #3c3c3c); }
  .winbtns .close { background: linear-gradient(#f0a090, #e05038 50%, #d03820 52%, #e86850); border-color: #e8b0a0; }
  .winbtns svg { display: block; width: 20px; height: 19px; }

  .menubar { display: flex; align-items: center; height: 24px; background: #e6e6e6; gap: 1px; position: relative; z-index: 5; }
  .menubar .grip { height: 14px; margin-right: 0; }
  .menuslot { position: relative; }
  .menubtn { display: block; height: 20px; padding: 0 4px; border: 1px solid transparent; border-radius: 2px; }
  .menubtn.opened { border-color: #8a8a8a; background: linear-gradient(#d8d8d8, #bcbcbc); }
  .docbtns { display: flex; gap: 2px; margin: 0 5px 0 auto; }
  .docbtns button { width: 17px; height: 16px; border: 1px solid #777; border-radius: 3px; background: linear-gradient(#fff, #d8d8d8); }
  .docbtns svg { display: block; width: 14px; height: 14px; }

  .menu { position: absolute; left: 0; top: 20px; width: 164px; padding: 2px 1px 1px; border: 1px solid #868686; background: #ededed; box-shadow: 2px 2px 3px rgba(0, 0, 0, .45); z-index: 10; }
  .slot { position: relative; }
  .item { display: flex; align-items: center; width: 100%; height: 22px; padding-left: 3px; text-align: left; }
  .pic { width: 16px; margin-right: 8px; }
  .label { flex: 1; }
  .item.hot { background: #5c96ff; color: #fff; }
  .short { margin-right: 13px; }
  .more { margin-right: 4px; border: 4px solid transparent; border-left: 5px solid #000; border-right: 0; }
  .hot .more { border-left-color: #fff; }
  hr { border: 0; height: 1px; margin: 4px 11px 4px 10px; background: #b4b4b4; }
  .submenu { left: 164px; top: 0; width: 134px; }
  hr.red { height: 3px; margin: 3px 0; background: #c00010; box-shadow: 0 1px 2px rgba(0, 0, 0, .35); }
  .tip { position: absolute; left: 133px; top: 13px; z-index: 12; }
  .tip svg { position: relative; z-index: 1; display: block; width: 34px; height: 20px; }
  .tip p { margin-top: -2px; padding: 3px 5px; border: 1px solid #000; border-radius: 7px; background: #ffffe1; color: #000; white-space: nowrap; box-shadow: 2px 2px 3px rgba(0, 0, 0, .5); }

  .bars { background: linear-gradient(#e6e6e6, #cecece); }
  .barrow { display: flex; height: 34px; }
  .toolbar { display: flex; align-items: center; box-sizing: border-box; border-top: 1px solid #c2c2c2; border-right: 1px solid #f6f6f6; box-shadow: inset 0 1px #f4f4f4; }
  .grip { flex: none; width: 3px; height: 24px; margin: 0 1px 0 4px; background: repeating-linear-gradient(#999 0 2px, #f4f4f4 2px 3px, transparent 3px 4px); }
  .toolbar + .toolbar .grip { margin-left: 3px; }
  .sep { flex: none; width: 2px; height: 28px; margin: 0 2px; background: linear-gradient(90deg, #a8a8a8 50%, #fafafa 50%); }
  .tool { flex: none; display: grid; place-items: center; width: 31px; height: 30px; box-sizing: border-box; }
  .pressed { border: 1px solid #444; border-radius: 3px; background: #fff; }
  .arrow { flex: none; display: grid; place-items: center; width: 12px; height: 30px; }
  .low { align-content: end; height: 24px; width: 14px; }
  .start { display: flex; align-items: center; gap: 3px; width: 66px; padding-left: 4px; box-sizing: border-box; }
  .chev { display: flex; flex-direction: column; align-items: flex-end; justify-content: space-between; width: 43px; height: 26px; padding-right: 5px; }
  .chev b { line-height: 10px; font-size: 14px; }
  .chev .down { margin-right: 1px; }

  .combo { display: inline-grid; height: 15px; border: 1px solid #555; border-radius: 3px; background: #fff; overflow: hidden; }
  .combo select { grid-area: 1 / 1; appearance: none; border: 0; padding: 0 18px 0 1px; background: none; line-height: 15px; height: 15px; }
  .combo > i { grid-area: 1 / 1; justify-self: end; display: grid; place-items: center; width: 16px; background: linear-gradient(#e4f0ff, #5c98e0); pointer-events: none; }
  .combo .down { border-width: 5px; border-bottom: 0; }
  .count { width: 36px; margin: 0 3px 0 4px; }
  .filter { width: 108px; }
  .scope { width: 108px; margin: 0 118px 0 9px; }

  .selbar { display: flex; align-items: center; height: 26px; padding: 0 4px 0 5px; border-top: 1px solid #999; background: linear-gradient(#c0c0c0, #dcdcdc); }
  .mini { display: grid; place-items: center; width: 22px; height: 22px; box-sizing: border-box; }
  .mini.on { border: 1px solid #444; border-radius: 2px; background: #fff; }
  .selbar .end { margin-left: auto; align-content: end; height: 18px; }

  .status { display: flex; align-items: center; height: 20px; border-top: 1px solid #f4f4f4; background: #dadada; font-size: 13px; font-weight: bold; white-space: nowrap; }
  .status .mono { font-size: 11px; font-weight: bold; }
  .cue { width: 470px; padding-left: 2px; }
  .feat { flex: 1; padding-left: 3px; border-left: 1px solid #f8f8f8; }
  .status i { width: 19px; height: 20px; border-left: 1px solid #f8f8f8; }
  .status i + i { width: 35px; }
  .status button { width: 21px; display: grid; place-items: center; border-left: 1px solid #f8f8f8; height: 20px; }

  .rail { display: flex; align-items: center; height: 17px; background: #d2d2d2; border-bottom: 1px solid #8a8578; border-top: 1px solid #a8a8a8; box-sizing: border-box; }
  .rail > i { flex: 1; height: 3px; margin-left: 4px; background: #f2f2f2; border-top: 1px solid #a0a0a0; }
  .mover { display: flex; height: 19px; margin-top: 3px; z-index: 3; }
  .mover button { width: 19px; border: 1px solid #777; background: linear-gradient(#fff, #d0d0d0); box-sizing: border-box; }
  .mover svg { display: block; width: 17px; height: 17px; fill: none; stroke: #666; stroke-width: 2.5; }
  .mover span { width: 65px; background: linear-gradient(#4a4a4a, #1a1a1a 40%); }

  main { flex: 1; display: flex; min-height: 0; }
  .view { flex: 1; border-left: 2px solid #8c877a; background: linear-gradient(#b6b7b9, #e6e7e9 68%); }
  .view svg { display: block; width: 100%; height: 100%; }
  .panel { width: 155px; padding: 8px 10px 0 10px; border-left: 1px solid #fff; border-right: 1px solid #fff; background: #ececec; }
  .panel h2 { display: flex; align-items: center; justify-content: space-between; height: 22px; padding: 0 4px; font-size: 13px; }
  .treebox { margin-top: 5px; border: 1px solid #666; border-top-width: 2px; background: #fff; }
  .colhead { display: flex; align-items: center; gap: 16px; width: 100%; height: 15px; padding-left: 6px; background: linear-gradient(#fafafa, #c8c8c8); }
  .colhead i { border: 5px solid transparent; border-bottom-color: #222; border-top: 0; }
  ul { list-style: none; overflow: hidden; height: 356px; }
  li { display: flex; align-items: center; height: 19px; border-bottom: 1px solid #ededed; white-space: nowrap; padding-left: 4px; gap: 2px; color: #222; }
  li.alt { background: #f6f6f6; }
  li.leaf { padding-left: 29px; }
  li.leaf::before { content: ""; flex: none; width: 8px; height: 20px; border-left: 1px dotted #999; background: linear-gradient(#bbb, #bbb) 0 9px / 100% 1px no-repeat; }
  li.last::before { height: 10px; align-self: flex-start; }
  label { display: flex; align-items: center; gap: 2px; }
  li.dim { color: #999; }
  .num { margin-left: 5px; }
  input { appearance: none; flex: none; width: 12px; height: 12px; margin: 0; border: 1px solid #111; background: #fff; }
  input::before, .tick { content: ""; display: block; width: 10px; height: 10px; background: #18b030; clip-path: polygon(0 50%, 20% 40%, 38% 65%, 90% 0, 100% 12%, 42% 100%, 30% 100%); }
  .tick { width: 12px; height: 12px; }
  .exp { width: 7px; height: 7px; margin-right: 5px; border: 1px solid #888; border-radius: 2px; font: 9px/7px "Liberation Mono", monospace; text-align: center; background: #fff; }
  .exp.none { border-color: transparent; background: linear-gradient(#bbb, #bbb) 4px 4px / 6px 1px no-repeat; }
  .hscroll { display: flex; height: 18px; background: #f2f4fa; }
  .hscroll button { width: 16px; border: 1px solid #a8bcf0; border-radius: 2px; background: linear-gradient(#dfe8ff, #b8ccf8); box-sizing: border-box; }
  .hscroll button svg { width: 8px; height: 8px; fill: none; stroke: #334a80; stroke-width: 2; }
  .hscroll button:last-child { margin-left: auto; }
  .thumb { display: grid; place-items: center; width: 58px; margin: 1px 2px; border: 1px solid #98b0f0; border-radius: 2px; background: linear-gradient(#d4e2ff, #b4caff); }
  .thumb i { width: 8px; height: 7px; background: repeating-linear-gradient(90deg, #8ca4e8 0 1px, transparent 1px 2px); }
  .split { display: grid; place-items: center; height: 12px; background: linear-gradient(#bbb, #bbb) 0 5px / 100% 1px no-repeat; }
  .split i { width: 22px; height: 4px; border: 1px solid #999; background: #d0d0d0; }
  .group { display: flex; align-items: center; width: 100%; height: 23px; border: 1px solid #f8f8f8; border-bottom-color: #999; background: linear-gradient(#f8f8f8, #e0e0e0 50%, #c4c4c4); }
  .group span { flex: 1; padding-left: 5px; text-align: left; font-size: 13px; font-weight: bold; }
  .group svg { width: 14px; height: 14px; padding: 3px 4px; border-left: 1px solid #999; }

  .rescol { width: 32px; padding: 15px 0 4px; background: #a2a2a2; display: flex; flex-direction: column; }
  .tab { flex: none; display: grid; place-items: center; width: 27px; height: 40px; margin-bottom: 2px; box-sizing: border-box; border: 1px solid #666; border-left: 0; border-radius: 0 4px 4px 0; background: linear-gradient(90deg, #ececec, #d0d0d0); }
  .tab.on { width: 29px; height: 43px; margin: 0 0 1px; background: #ececec; border-color: #fff; }
  .tab.far { margin: 12px 0 2px; }
  .stub { height: 12px; align-items: end; }
  .stub svg { width: 26px; height: 9px; display: block; }
  .steps { display: grid; gap: 1px; margin: 2px 0 0 6px; justify-content: start; }
  .steps button { width: 15px; height: 15px; border: 1px solid #f4f4f4; border-right-color: #777; border-bottom-color: #777; box-sizing: border-box; background: #dcdcdc; }
  .steps svg { display: block; width: 13px; height: 13px; stroke: #444; fill: #444; }
  .steps .off svg { stroke: #aaa; fill: #aaa; }
</style>
